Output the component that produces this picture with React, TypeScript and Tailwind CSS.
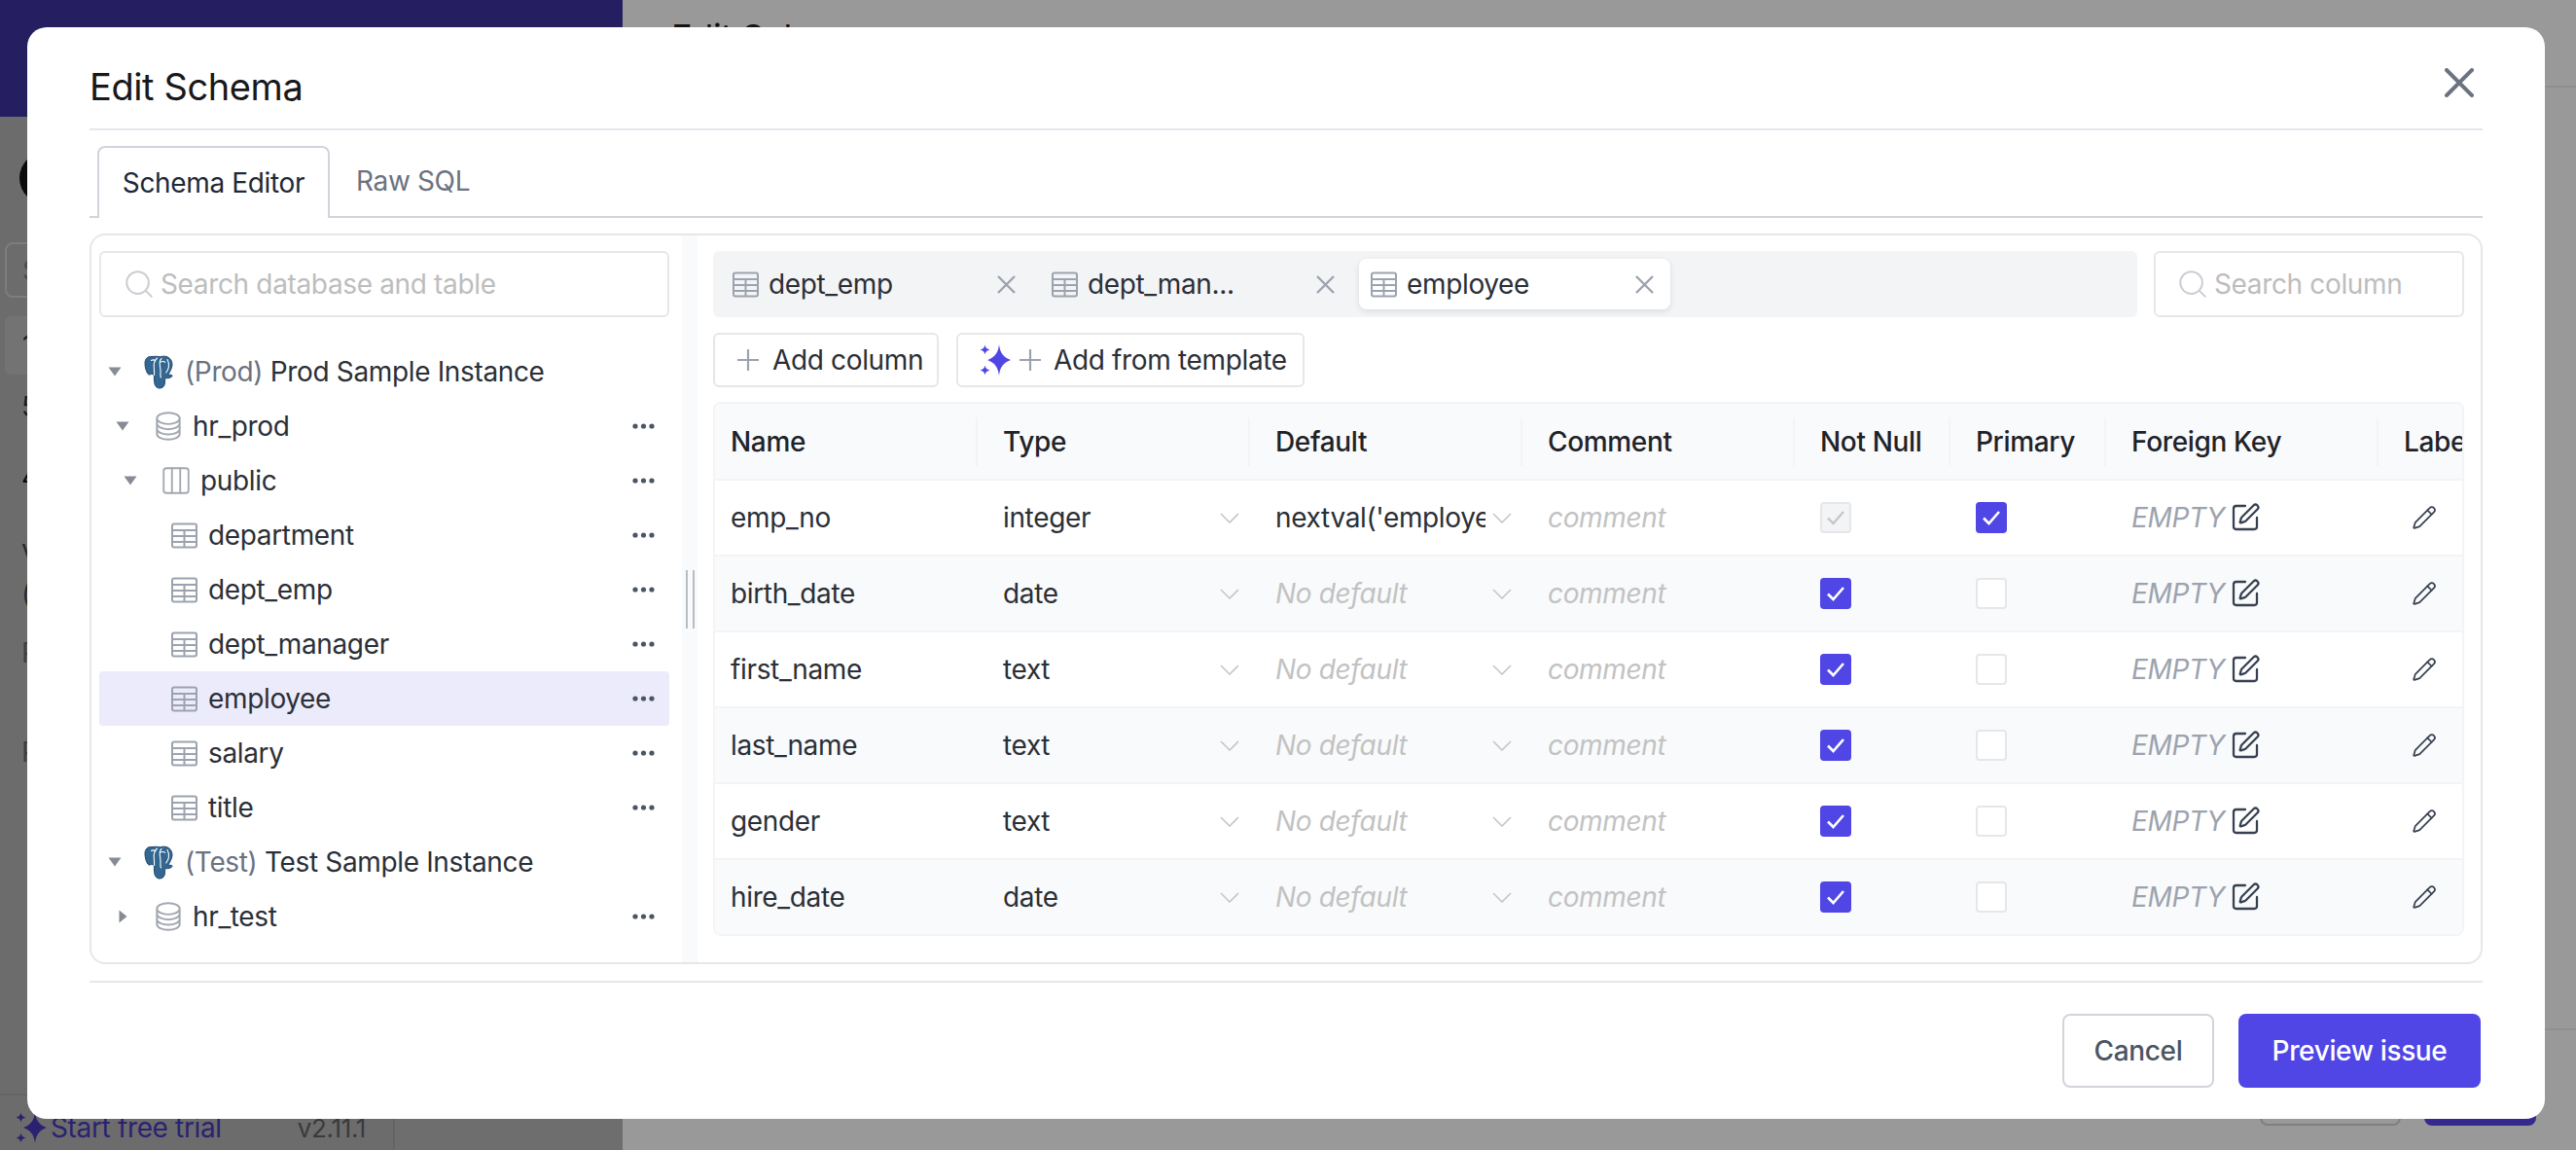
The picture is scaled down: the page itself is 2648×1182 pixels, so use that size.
import { Columns3, Search, SquarePen, Pencil } from 'lucide-react'

const cols = ['w-[278px] pl-4', 'w-[280px] pl-[18px]', 'w-[280px] pl-[18px]', 'w-[280px] pl-[18px]', 'w-[160px] pl-[18px]', 'w-[160px] pl-[18px]', 'w-[280px] pl-[18px]', 'w-[160px] pl-[18px]']
const headers = ['Name', 'Type', 'Default', 'Comment', 'Not Null', 'Primary', 'Foreign Key', 'Label']

const columns = [
  { name: 'emp_no', type: 'integer', def: "nextval('employee", notNull: 'locked', primary: true },
  { name: 'birth_date', type: 'date', def: '', notNull: 'on', primary: false },
  { name: 'first_name', type: 'text', def: '', notNull: 'on', primary: false },
  { name: 'last_name', type: 'text', def: '', notNull: 'on', primary: false },
  { name: 'gender', type: 'text', def: '', notNull: 'on', primary: false },
  { name: 'hire_date', type: 'date', def: '', notNull: 'on', primary: false },
]

function Caret({ open = true }: { open?: boolean }) {
  return (
    <span className="w-5 h-5 flex items-center justify-center shrink-0">
      {open ? (
        <svg width="14" height="10" viewBox="0 0 14 10"><path d="M0.5 0.5h13L7 9.5z" fill="#868b94" /></svg>
      ) : (
        <svg width="9" height="14" viewBox="0 0 9 14"><path d="M0.5 0.5v13L8.5 7z" fill="#868b94" /></svg>
      )}
    </span>
  )
}

function TableIcon() {
  return (
    <svg width="27" height="27" viewBox="0 0 27 27" fill="none" stroke="#9ca3af" strokeWidth="2" className="shrink-0">
      <rect x="1" y="1.5" width="25" height="24" rx="2" />
      <path d="M1 8h25M1 14h25M1 20h25M13.5 8v17" />
    </svg>
  )
}

function DbIcon() {
  return (
    <svg width="34" height="34" viewBox="0 0 24 24" fill="none" stroke="#a3a8b0" strokeWidth="1.4" className="shrink-0">
      <path d="M20.25 6.375c0 2.278-3.694 4.125-8.25 4.125S3.75 8.653 3.75 6.375m16.5 0c0-2.278-3.694-4.125-8.25-4.125S3.75 4.097 3.75 6.375m16.5 0v11.25c0 2.278-3.694 4.125-8.25 4.125s-8.25-1.847-8.25-4.125V6.375m16.5 0v3.75m-16.5-3.75v3.75m16.5 0v3.75C20.25 16.153 16.556 18 12 18s-8.25-1.847-8.25-4.125v-3.75m16.5 0c0 2.278-3.694 4.125-8.25 4.125s-8.25-1.847-8.25-4.125" />
    </svg>
  )
}

function PgIcon() {
  return (
    <svg width="31" height="35" viewBox="0 0 31 35" className="shrink-0">
      {/* head and trunk */}
      <path d="M8 1.500C3.500 1 1 4 1 8.500c0 3.500 1.200 8 2.800 10.500 1 1.500 2.800 1.300 4.200 0 .7.800 1.500 1.300 2.500 1.500-.2 2-.2 4.500.1 7 .4 3.500 2 6.500 5.400 6.500 3.500 0 5.300-2.300 5.500-5.800.1-2 .1-3.500.3-4.700 1.900.5 4.800.2 6.600-1.200 1.300-1.100.5-2.200-.9-2-1 .2-1.900.1-2.600-.3 1.800-2.700 3.600-6.200 4.100-9.700C29 6 27 2.500 23 1.500c-2.400-.6-4.700-.4-6.400.3-1.400-.4-2.900-.5-4.200-.5C11 1.200 9.500 1.500 8 1.500z" fill="#336791" stroke="#24486f" strokeWidth="1" />
      {/* white contour lines */}
      <path d="M13.500 3c-2.700 2.500-3.700 6-3.200 10 .2 2 .3 5 .2 7.500M18 3.500c-1.600 1.500-2.100 4-1.600 7 .4 3 .9 5.500.6 8-.2 1.500 0 3 .4 4.500M24 4.500c1.500 2.500 2 5 1.400 7.800-.4 2-1.500 4-2.600 5.700M7.500 5.500c2-1 3.500-.5 4.200.5M17.500 7c1.500-.8 3.700-.5 4.200.5" fill="none" stroke="#fff" strokeWidth="1.1" strokeLinecap="round" />
    </svg>
  )
}

function Dots() {
  return (
    <svg width="23" height="6" viewBox="0 0 23 6" fill="#4b5563" className="shrink-0">
      <circle cx="3" cy="3" r="2.6" />
      <circle cx="11.500" cy="3" r="2.600" />
      <circle cx="20" cy="3" r="2.600" />
    </svg>
  )
}

function Sparkle({ color = '#4f46e5' }: { color?: string }) {
  return (
    <svg width="32" height="32" viewBox="0 0 32 32" fill={color} className="shrink-0">
      <path d="M20 0c1 8.500 4 13 12 16-8 3-11 7.500-12 16-1-8.500-4-13-12-16 8-3 11-7.500 12-16z" />
      <path d="M5.500 0.500c.4 2.800 1.800 4.300 5 5-3.200.7-4.600 2.200-5 5-.4-2.800-1.800-4.300-5-5 3.200-.7 4.600-2.200 5-5z" />
      <path d="M5.500 21.500c.4 2.800 1.800 4.300 5 5-3.200.7-4.600 2.200-5 5-.4-2.800-1.800-4.300-5-5 3.200-.7 4.600-2.200 5-5z" />
    </svg>
  )
}

function Plus() {
  return (
    <svg width="24" height="24" viewBox="0 0 24 24" stroke="#9ca3af" strokeWidth="2.2" className="shrink-0">
      <path d="M12 1v22M1 12h22" />
    </svg>
  )
}

function Cross() {
  return (
    <svg width="19" height="19" viewBox="0 0 19 19" stroke="#9ca3af" strokeWidth="2.4" className="shrink-0">
      <path d="M1 1l17 17M18 1L1 18" />
    </svg>
  )
}

function Chevron() {
  return (
    <svg width="20" height="11" viewBox="0 0 20 11" fill="none" stroke="#c4c6ca" strokeWidth="1.6" className="shrink-0">
      <path d="M1 1l9 9 9-9" />
    </svg>
  )
}

function Checkbox({ state }: { state: string }) {
  if (state === 'off') {
    return <span className="w-8 h-8 rounded-[4px] border-2 border-[#e5e7eb] bg-white shrink-0" />
  }
  if (state === 'locked') {
    return (
      <span className="w-8 h-8 rounded-[4px] border-2 border-[#e5e7eb] bg-[#f3f4f6] flex items-center justify-center shrink-0">
        <svg width="20" height="16" viewBox="0 0 20 16" fill="none" stroke="#c4c6ca" strokeWidth="2.4"><path d="M2 8.500l5.500 5.500L18 2" /></svg>
      </span>
    )
  }
  return (
    <span className="w-8 h-8 rounded-[4px] bg-[#4f46e5] flex items-center justify-center shrink-0">
      <svg width="20" height="16" viewBox="0 0 20 16" fill="none" stroke="#fff" strokeWidth="2.6"><path d="M2 8.500l5.500 5.500L18 2" /></svg>
    </span>
  )
}

function TableTab({ label, active = false }: { label: string; active?: boolean }) {
  return (
    <div className={`w-[320px] h-[52px] flex items-center pl-3 pr-[17px] rounded-lg ${active ? 'bg-white shadow-[0_2px_6px_rgba(0,0,0,0.1)]' : ''}`}>
      <TableIcon />
      <span className="ml-[10px] text-[28px] text-[#2b2f36] flex-1">{label}</span>
      <Cross />
    </div>
  )
}

function SearchBox({ label, box, pad }: { label: string; box: string; pad: string }) {
  return (
    <div className={`${box} ${pad} h-[68px] border-2 border-[#e5e7eb] rounded-[6px] flex items-center shrink-0`}>
      <Search size={34} strokeWidth={1.4} color="#cbced3" className="shrink-0" />
      <span className="ml-[5px] text-[28px] text-[#bdbdbd] whitespace-nowrap">{label}</span>
    </div>
  )
}

function TreeRow({ pl, gap = 'ml-[8px]', icon, children, caret, dots = true, selected = false }: { pl: string; gap?: string; icon: React.ReactNode; children: React.ReactNode; caret?: 'open' | 'closed'; dots?: boolean; selected?: boolean }) {
  return (
    <div className={`h-14 flex items-center rounded-[4px] pr-[15px] ${pl} ${selected ? 'bg-[#ecebfb]' : ''}`}>
      {caret && <Caret open={caret === 'open'} />}
      {caret && <span className="w-[20px] shrink-0" />}
      {icon}
      <div className={`${gap} flex-1 text-[28px] text-[#2b2f36] whitespace-nowrap`}>{children}</div>
      {dots && <Dots />}
    </div>
  )
}

export default function App() {
  return (
    <div className="relative w-[2648px] h-[1182px] overflow-hidden flex bg-[#999999] font-['Inter',sans-serif] tracking-[-0.35px]">
      {/* page behind the dialog */}
      <div className="w-[640px] flex flex-col bg-[#6c6c6c] shrink-0">
        <div className="h-[120px] bg-[#251f62] shrink-0" />
        <div className="flex-1 flex">
          <div className="w-[406px] flex flex-col border-r-2 border-[#646464]">
            <div className="w-[54px] h-[54px] rounded-full bg-[#0a0a0a] ml-5 mt-9" />
            <div className="ml-[5px] mr-5 mt-[39px] h-[57px] border-2 border-[#7d7d7d] rounded-[8px] flex items-center pl-4 text-[28px] text-[#4a4a4a]">Search</div>
            <div className="ml-[5px] mr-5 mt-[19px] h-[60px] bg-[#737373] rounded-[6px] flex items-center pl-[18px] text-[28px] text-[#1c1c1c]">1</div>
            <div className="ml-[22px] mt-[16px] text-[28px] leading-[34px] text-[#1c1c1c]">5</div>
            <div className="ml-[22px] mt-[38px] text-[28px] leading-[34px] text-[#0a0a0a]">4</div>
            <div className="ml-[22px] mt-[41px] text-[28px] leading-[34px] text-[#2a2a2a]">v</div>
            <div className="ml-[22px] mt-[11px] text-[28px] leading-[34px] text-[#2a2a2a]">(</div>
            <div className="ml-[22px] mt-[27px] text-[28px] leading-[34px] text-[#3f3f3f]">P</div>
            <div className="ml-[22px] mt-[68px] text-[28px] leading-[34px] text-[#3f3f3f]">P</div>
            <div className="mt-auto h-[58px] flex items-center pl-4 pt-[10px] border-t-2 border-[#646464]">
              <Sparkle color="#2a2270" />
              <span className="ml-1 text-[28px] text-[#2a2270] whitespace-nowrap">Start free trial</span>
              <span className="ml-[78px] text-[26px] text-[#3a3a3a]">v2.11.1</span>
            </div>
          </div>
          <div className="flex-1 bg-[#6e6e6e]" />
        </div>
      </div>
      <div className="flex-1 flex flex-col">
        <div className="h-[90px] border-b-2 border-[#8f8f8f] flex items-start justify-between pl-[50px] pr-[48px] pt-[11px] text-[36px] text-[#141414]">
          <span>Edit Schema</span>
          <span className="text-[#555555]">×</span>
        </div>
        <div className="flex-1" />
        <div className="h-[125px] border-t-2 border-[#8f8f8f] flex justify-end items-start gap-6 pt-[22px] pr-[41px]">
          <div className="w-[145px] h-[76px] border-2 border-[#7f7f7f] rounded-[8px]" />
          <div className="w-[115px] h-[76px] bg-[#342a8e] rounded-[8px]" />
        </div>
      </div>

      {/* dialog */}
      <div className="absolute left-[28px] top-[28px] w-[2588px] h-[1122px] bg-white rounded-[20px] px-16 pt-[18px] flex flex-col">
        <div className="h-[88px] flex items-center justify-between border-b-2 border-[#e5e7eb] shrink-0">
          <h1 className="text-[38px] text-[#18181b] leading-[44px] tracking-[-0.4px]">Edit Schema</h1>
          <button className="mr-[9px] mb-[8px]">
            <svg width="30" height="30" viewBox="0 0 30 30" stroke="#6b7280" strokeWidth="4" strokeLinecap="round" className="block">
              <path d="M2 2l26 26M28 2L2 28" />
            </svg>
          </button>
        </div>

        <div className="mt-4 h-[74px] flex border-b-2 border-[#d1d5db] pl-2 shrink-0">
          <div className="h-[74px] w-[239px] border-2 border-b-0 border-[#d1d5db] rounded-t-[8px] bg-white flex items-center justify-center text-[28px] text-[#1f2937]">Schema Editor</div>
          <div className="h-[72px] flex items-center pl-[27px] text-[28px] text-[#6b7280]">Raw SQL</div>
        </div>

        <div className="mt-4 h-[751px] border-2 border-[#e5e7eb] rounded-[16px] flex overflow-hidden shrink-0">
          {/* tree */}
          <div className="w-[607px] pt-4 pl-2 pr-[13px] shrink-0">
            <SearchBox label="Search database and table" box="w-full" pad="pl-[22px]" />
            <div className="mt-[28px] flex flex-col">
              <TreeRow pl="pl-[6px]" caret="open" dots={false} icon={<PgIcon />}>
                <span className="ml-[3px] text-[#6b7280]">(Prod)</span> Prod Sample Instance
              </TreeRow>
              <TreeRow pl="pl-[14px]" caret="open" icon={<DbIcon />}>hr_prod</TreeRow>
              <TreeRow pl="pl-[22px]" caret="open" icon={<Columns3 size={34} strokeWidth={1.3} color="#a3a8b0" className="shrink-0" />}>public</TreeRow>
              <TreeRow pl="pl-[74px]" gap="ml-[11px]" icon={<TableIcon />}>department</TreeRow>
              <TreeRow pl="pl-[74px]" gap="ml-[11px]" icon={<TableIcon />}>dept_emp</TreeRow>
              <TreeRow pl="pl-[74px]" gap="ml-[11px]" icon={<TableIcon />}>dept_manager</TreeRow>
              <TreeRow pl="pl-[74px]" gap="ml-[11px]" icon={<TableIcon />} selected>employee</TreeRow>
              <TreeRow pl="pl-[74px]" gap="ml-[11px]" icon={<TableIcon />}>salary</TreeRow>
              <TreeRow pl="pl-[74px]" gap="ml-[11px]" icon={<TableIcon />}>title</TreeRow>
              <TreeRow pl="pl-[6px]" caret="open" dots={false} icon={<PgIcon />}>
                <span className="ml-[3px] text-[#6b7280]">(Test)</span> Test Sample Instance
              </TreeRow>
              <TreeRow pl="pl-[14px]" caret="closed" icon={<DbIcon />}>hr_test</TreeRow>
            </div>
          </div>

          {/* splitter */}
          <div className="relative w-4 bg-[#f9fafb] shrink-0">
            <div className="absolute left-[4px] top-[344px] w-[9px] h-[60px] border-x-2 border-[#b8bcc3]" />
          </div>

          {/* editor */}
          <div className="flex-1 min-w-0 pt-4 pl-4 pr-[17px]">
            <div className="flex gap-[17px]">
              <div className="flex-1 h-[68px] bg-[#f3f4f6] rounded-[6px] flex items-center gap-2 px-2">
                <TableTab label="dept_emp" />
                <TableTab label="dept_man..." />
                <TableTab label="employee" active />
              </div>
              <SearchBox label="Search column" box="w-[319px]" pad="pl-[21px]" />
            </div>

            <div className="mt-4 flex gap-[18px]">
              <button className="w-[232px] h-14 border-2 border-[#e5e7eb] rounded-[6px] flex items-center pl-[22px]">
                <Plus />
                <span className="ml-[13px] text-[28px] text-[#2b2f36]">Add column</span>
              </button>
              <button className="w-[358px] h-14 border-2 border-[#e5e7eb] rounded-[6px] flex items-center pl-[22px]">
                <Sparkle />
                <span className="ml-[8px]"><Plus /></span>
                <span className="ml-[12px] text-[28px] text-[#2b2f36] whitespace-nowrap">Add from template</span>
              </button>
            </div>

            <div className="mt-[15px] h-[549px] border-2 border-[#f3f4f6] rounded-[8px] overflow-hidden">
              <div className="h-[77px] flex bg-[#f9fafb]">
                {headers.map((h, i) => (
                  <div key={h} className={`${cols[i]} h-full shrink-0 flex items-center justify-between pr-2 text-[28px] font-medium text-[#1f2329]`}>
                    <span className="whitespace-nowrap">{h}</span>
                    {i < 7 && <span className="w-[2px] h-[50px] bg-[#f3f4f6]" />}
                  </div>
                ))}
              </div>
              {columns.map((c, r) => (
                <div key={c.name} className={`h-[78px] flex items-center border-t-2 border-[#f3f4f6] text-[28px] ${r % 2 ? 'bg-[#f9fafb]' : 'bg-white'}`}>
                  <div className={`${cols[0]} shrink-0 text-[#2b2f36]`}>{c.name}</div>
                  <div className={`${cols[1]} shrink-0 pr-[19px] flex items-center justify-between text-[#2b2f36]`}>
                    <span>{c.type}</span>
                    <Chevron />
                  </div>
                  <div className={`${cols[2]} shrink-0 pr-[19px] flex items-center justify-between`}>
                    <span className={`w-[216px] overflow-hidden whitespace-nowrap ${c.def ? 'text-[#2b2f36]' : 'italic text-[#c2c2c2]'}`}>{c.def || 'No default'}</span>
                    <Chevron />
                  </div>
                  <div className={`${cols[3]} shrink-0 italic text-[#c2c2c2]`}>comment</div>
                  <div className={`${cols[4]} shrink-0 flex`}><Checkbox state={c.notNull} /></div>
                  <div className={`${cols[5]} shrink-0 flex`}><Checkbox state={c.primary ? 'on' : 'off'} /></div>
                  <div className={`${cols[6]} shrink-0 flex items-center italic text-[#9ca3af]`}>
                    <span>EMPTY</span>
                    <SquarePen size={32} strokeWidth={1.7} color="#374151" className="ml-[5px] shrink-0" />
                  </div>
                  <div className="w-[160px] pl-[26px] shrink-0"><Pencil size={26} strokeWidth={1.6} color="#374151" /></div>
                </div>
              ))}
            </div>
          </div>
        </div>

        <div className="mt-[17px] border-t-2 border-[#e5e7eb] pt-[32px] pr-[2px] flex justify-end gap-[25px] shrink-0">
          <button className="w-[156px] h-[76px] border-2 border-[#d1d5db] rounded-[8px] text-[28px] font-medium text-[#4b5563]">Cancel</button>
          <button className="w-[249px] h-[76px] rounded-[8px] bg-[#4f46e5] text-[28px] font-medium text-white">Preview issue</button>
        </div>
      </div>
    </div>
  )
}
